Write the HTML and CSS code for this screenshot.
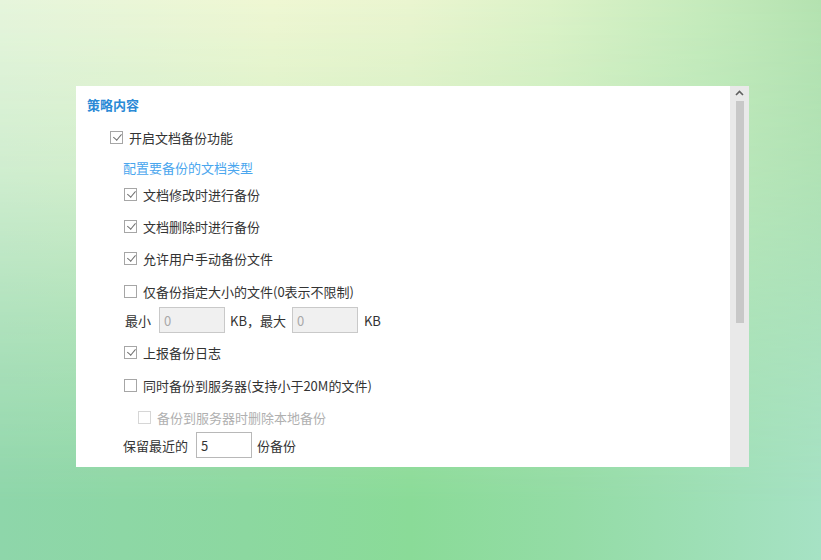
FILE: index.html
```html
<!DOCTYPE html>
<html lang="zh">
<head>
<meta charset="utf-8">
<link rel="stylesheet" href="styles.css">
</head>
<body>
<div class="stage">
  <div class="panel">
    <div class="content">
      <div class="row heading">策略内容</div>
      <div class="row r-top1 ind1"><span class="cb on"></span><span>开启文档备份功能</span></div>
      <div class="row r-link ind2 link">配置要备份的文档类型</div>
      <div class="row r-neg ind3"><span class="cb on"></span><span>文档修改时进行备份</span></div>
      <div class="row ind3"><span class="cb on"></span><span>文档删除时进行备份</span></div>
      <div class="row ind3"><span class="cb on"></span><span>允许用户手动备份文件</span></div>
      <div class="row r-wide ind3"><span class="cb"></span><span>仅备份指定大小的文件(0表示不限制)</span></div>
      <div class="row r-tight ind3b">
        <span>最小</span><span class="inp dis first">0</span><span>KB，最大</span><span class="inp dis">0</span><span>KB</span>
      </div>
      <div class="row ind3"><span class="cb on"></span><span>上报备份日志</span></div>
      <div class="row r-wide ind3"><span class="cb"></span><span>同时备份到服务器(支持小于20M的文件)</span></div>
      <div class="row ind4 disabled"><span class="cb"></span><span>备份到服务器时删除本地备份</span></div>
      <div class="row r-none ind2">
        <span>保留最近的</span><span class="inp keep">5</span><span>份备份</span>
      </div>
    </div>
    <div class="scrollbar">
      <div class="arrow"><svg width="9" height="6" viewBox="0 0 9 6"><path d="M1 5 L4.5 1.5 L8 5" fill="none" stroke="#606060" stroke-width="1.6"/></svg></div>
      <div class="thumb"></div>
    </div>
  </div>
</div>
</body>
</html>
```
FILE: styles.css
```css
html, body {
  margin: 0;
  padding: 0;
  width: 821px;
  height: 560px;
  overflow: hidden;
}
body {
  font-family: "Noto Sans CJK SC", "Microsoft YaHei", sans-serif;
  font-size: 13px;
  color: #333;
  position: relative;
  background: linear-gradient(90deg, #8ed6aa 0%, #8cd8a0 30%, #8adb98 50%, #94dca6 70%, #a6e2c4 100%);
}
body::before {
  content: "";
  position: absolute;
  left: 0;
  top: 0;
  width: 821px;
  height: 560px;
  background: linear-gradient(90deg, #e6f5dc 0%, #eff7d3 33%, #eaf5d0 50%, #dcf2c8 67%, #c6ebbc 85%, #b4e2b0 100%);
  -webkit-mask-image: linear-gradient(180deg, #000 0%, rgba(0,0,0,0.75) 30%, rgba(0,0,0,0.35) 60%, rgba(0,0,0,0) 90%);
  mask-image: linear-gradient(180deg, #000 0%, rgba(0,0,0,0.75) 30%, rgba(0,0,0,0.35) 60%, rgba(0,0,0,0) 90%);
  z-index: 0;
}
.stage {
  position: relative;
  z-index: 1;
  width: 821px;
  height: 560px;
  padding: 86px 0 0 76px;
  box-sizing: border-box;
}
.panel {
  width: 673px;
  height: 381px;
  background: #fff;
  display: flex;
}
.content {
  flex: 1;
  display: flex;
  flex-direction: column;
  padding-top: 4px;
}
.row {
  height: 28px;
  display: flex;
  align-items: center;
  margin-top: 4px;
  white-space: nowrap;
}
.heading {
  margin-top: 0;
  padding-left: 11px;
  color: #2b8ad6;
  font-weight: bold;
}
.r-top1 { margin-top: 5px; }
.r-link { margin-top: 2px; }
.r-tight { margin-top: 1px; }
.r-none { margin-top: 0; }
.r-neg { margin-top: -1px; }
.r-wide { margin-top: 5px; }
.ind1 { padding-left: 34px; }
.ind2 { padding-left: 47px; }
.ind3 { padding-left: 48px; }
.ind3b { padding-left: 49px; }
.ind4 { padding-left: 62px; }
.link { color: #4aa6ee; }
.cb {
  width: 11px;
  height: 11px;
  border: 1px solid #a6a6a6;
  background: #fff;
  margin-right: 6px;
  position: relative;
  flex: none;
}
.cb.on::after {
  content: "";
  position: absolute;
  left: 3.5px;
  top: 0px;
  width: 3.5px;
  height: 7px;
  border-right: 1.5px solid #6f6f6f;
  border-bottom: 1.5px solid #6f6f6f;
  transform: rotate(40deg);
}
.disabled { color: #b0b0b0; }
.disabled .cb { border-color: #d6d6d6; }
.inp {
  box-sizing: border-box;
  height: 26px;
  border: 1px solid #c9c9c9;
  display: flex;
  align-items: center;
  padding-left: 4px;
  margin: 0 6px 0 6px;
}
.inp.dis {
  width: 66px;
  background: #f0f0f0;
  color: #a8a8a8;
}
.inp.dis.first {
  margin: 0 5px 0 8px;
}
.inp.keep {
  width: 56px;
  height: 26px;
  background: #fff;
  border-color: #b8b8b8;
  color: #333;
  margin: 0 5px 0 8px;
}
.scrollbar {
  width: 19px;
  background: #e9e9e9;
  display: flex;
  flex-direction: column;
  align-items: center;
}
.arrow {
  height: 14px;
  display: flex;
  align-items: center;
  justify-content: center;
}
.thumb {
  margin-top: 1px;
  width: 8px;
  height: 222px;
  background: #c8c8c8;
  margin-left: 1px;
}
```
